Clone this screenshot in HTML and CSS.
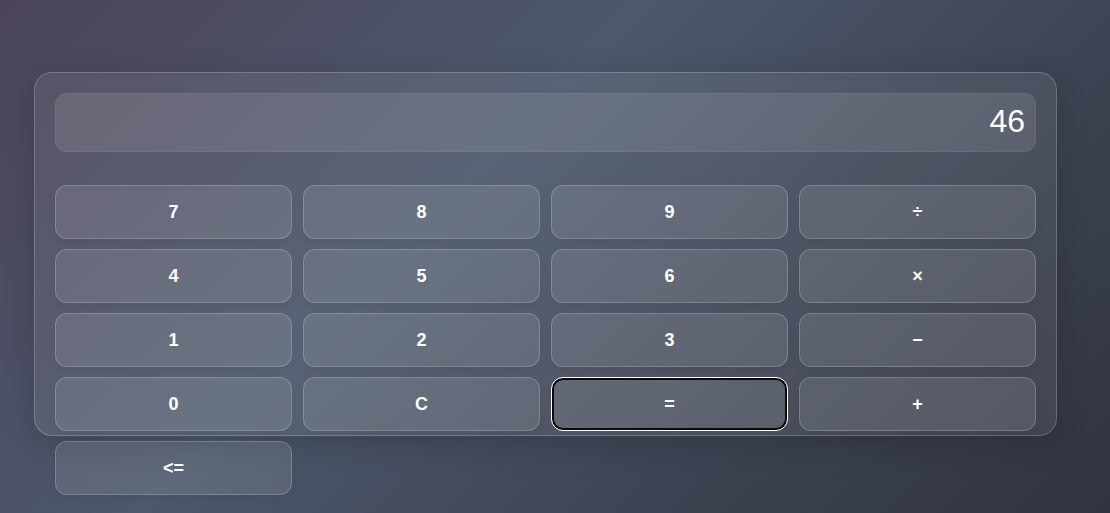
FILE: index.html
```html
<!DOCTYPE html>
<html>
<head>
<meta charset="utf-8">
<link rel="stylesheet" href="styles.css">
</head>
<body>
<div class="calc">
  <div class="display">46</div>
  <div class="keys">
    <button class="key">7</button>
    <button class="key">8</button>
    <button class="key">9</button>
    <button class="key">÷</button>
    <button class="key">4</button>
    <button class="key">5</button>
    <button class="key">6</button>
    <button class="key">×</button>
    <button class="key">1</button>
    <button class="key">2</button>
    <button class="key">3</button>
    <button class="key">−</button>
    <button class="key">0</button>
    <button class="key">C</button>
    <button class="key focused">=</button>
    <button class="key">+</button>
    <button class="key">&lt;=</button>
  </div>
</div>
</body>
</html>
```

FILE: styles.css
```css
html, body {
  margin: 0;
  height: 100%;
}
body {
  background: linear-gradient(135deg, #4b4459 0%, #4d586b 40%, #3f4555 68%, #30343e 100%);
  font-family: "Liberation Sans", Arial, sans-serif;
  overflow: hidden;
}
.calc {
  box-sizing: border-box;
  margin: 72px 0 0 34px;
  width: 1023px;
  height: 364px;
  padding: 20px;
  border-radius: 18px;
  background: rgba(255, 255, 255, 0.07);
  border: 1px solid rgba(255, 255, 255, 0.2);
  box-shadow: 0 8px 32px rgba(0, 0, 0, 0.18);
}
.display {
  box-sizing: border-box;
  height: 59px;
  margin: 0 0 33px 0;
  padding: 0 10px 3px;
  border-radius: 12px;
  background: rgba(255, 255, 255, 0.1);
  border: 1px solid rgba(255, 255, 255, 0.06);
  color: #fff;
  font-size: 32px;
  display: flex;
  align-items: center;
  justify-content: flex-end;
}
.keys {
  display: grid;
  grid-template-columns: repeat(4, 1fr);
  grid-auto-rows: 54px;
  column-gap: 11px;
  row-gap: 10px;
}
.key {
  box-sizing: border-box;
  border-radius: 12px;
  background: rgba(255, 255, 255, 0.1);
  border: 1px solid rgba(255, 255, 255, 0.2);
  color: #fff;
  font-family: "Liberation Sans", Arial, sans-serif;
  font-size: 18px;
  font-weight: 600;
  box-shadow: 0 4px 8px rgba(0, 0, 0, 0.06);
  padding: 0;
}
.focused {
  border: 1px solid #fff;
  box-shadow: inset 0 0 0 2px #0a0a0a;
}
```
